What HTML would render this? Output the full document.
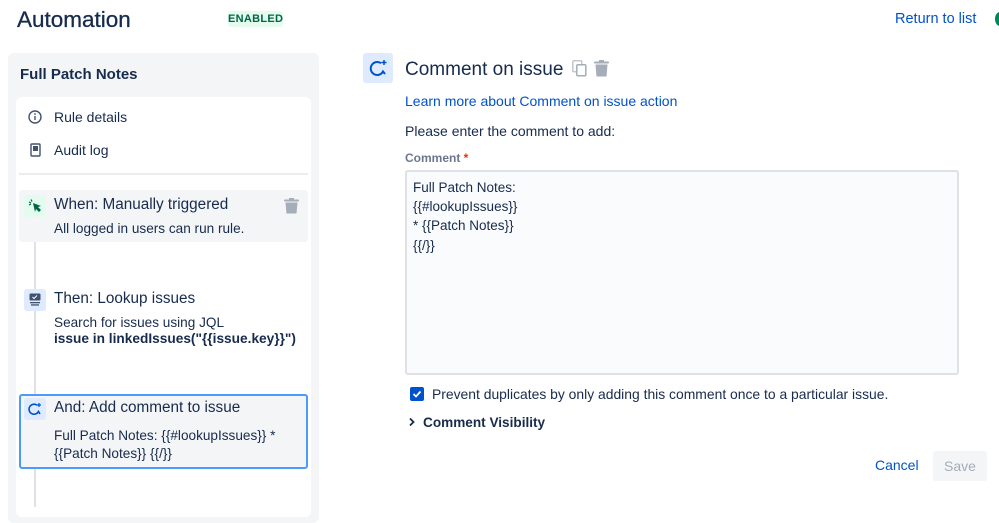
<!DOCTYPE html>
<html><head><meta charset="utf-8"><style>
*{box-sizing:border-box;margin:0;padding:0}
body{width:999px;height:505px;overflow:hidden;background:#fff;font-family:"Liberation Sans",sans-serif;color:#172b4d;position:relative}
.a{position:absolute;white-space:nowrap}
</style></head><body>
<div class="a" style="left:17px;top:6px;font-size:22.5px;line-height:28px;-webkit-text-stroke:0.3px #172b4d">Automation</div>
<div class="a" style="left:228px;top:11px;width:55px;height:16px;background:#e3fcef;color:#006644;font-size:11px;font-weight:bold;line-height:16px;text-align:center;border-radius:3px;letter-spacing:.3px">ENABLED</div>
<div class="a" style="left:895px;top:10px;font-size:14.5px;color:#0052cc;line-height:18px">Return to list</div>
<div class="a" style="left:995px;top:12px;width:10px;height:14px;border-radius:50%;background:#00875a"></div>

<div class="a" style="left:8px;top:53px;width:311px;height:470px;background:#f4f5f7;border-radius:6px"></div>
<div class="a" style="left:20px;top:66px;font-size:15px;font-weight:bold;line-height:18px">Full Patch Notes</div>
<div class="a" style="left:16px;top:97px;width:295px;height:420px;background:#fff;border-radius:6px"></div>
<svg class="a" style="left:28px;top:110px" width="14" height="14"><circle cx="7" cy="7" r="6" fill="none" stroke="#42526e" stroke-width="1.4"/><rect x="6.3" y="6" width="1.4" height="4" fill="#42526e"/><circle cx="7" cy="4" r=".9" fill="#42526e"/></svg>
<div class="a" style="left:54px;top:109px;font-size:14px;line-height:17px">Rule details</div>
<svg class="a" style="left:30px;top:143px" width="12" height="14"><rect x="1" y="1" width="9" height="12" rx="1" fill="none" stroke="#42526e" stroke-width="1.4"/><rect x="3" y="3" width="5" height="5" fill="#42526e"/></svg>
<div class="a" style="left:54px;top:142px;font-size:14px;line-height:17px">Audit log</div>
<div class="a" style="left:19px;top:173px;width:289px;height:2px;background:#ebecf0"></div>

<div class="a" style="left:34px;top:217px;width:2px;height:290px;background:#dfe1e6"></div>
<div class="a" style="left:19px;top:190px;width:289px;height:52px;background:#f4f5f7;border-radius:3px"></div>
<div class="a" style="left:24px;top:195px;width:22px;height:22px;background:#e3fcef;border-radius:3px"></div>
<svg class="a" style="left:28px;top:199px" width="14" height="14"><path d="M5 4l8 3-3 1 3 3-2 2-3-3-1 3z" fill="#006644"/><path d="M1 3l2 1M3 0.5l1 2M1 6l2-1" stroke="#006644" stroke-width="1.2"/></svg>
<div class="a" style="left:54px;top:196px;font-size:15.3px;line-height:18px">When: Manually triggered</div>
<svg class="a" style="left:284px;top:198px" width="15" height="16"><rect x="0" y="1.5" width="15" height="2" rx="1" fill="#a5adba"/><rect x="5" y="0" width="5" height="2" fill="#a5adba"/><path d="M1.5 4.5h12l-1 11h-10z" fill="#a5adba"/></svg>
<div class="a" style="left:54px;top:221px;font-size:13.6px;line-height:16px">All logged in users can run rule.</div>

<div class="a" style="left:24px;top:289px;width:22px;height:22px;background:#deebff;border-radius:3px"></div>
<svg class="a" style="left:29px;top:293px" width="12" height="13"><rect x="0.5" y="0.5" width="11" height="7" rx="1" fill="#42526e"/><path d="M3.5 4l1.5 1.5 3-3" stroke="#fff" fill="none" stroke-width="1"/><rect x="1" y="9" width="10" height="1.3" fill="#42526e"/><rect x="2" y="11.3" width="8" height="1.3" fill="#42526e"/></svg>
<div class="a" style="left:54px;top:290px;font-size:15.3px;line-height:18px">Then: Lookup issues</div>
<div class="a" style="left:54px;top:315px;font-size:13.6px;line-height:16px">Search for issues using JQL</div>
<div class="a" style="left:54px;top:331px;font-size:13.7px;line-height:16px;font-weight:bold">issue in linkedIssues("{{issue.key}}")</div>

<div class="a" style="left:19px;top:394px;width:289px;height:75px;background:#f4f5f7;border:2px solid #4c9aff;border-radius:3px"></div>
<div class="a" style="left:24px;top:398px;width:22px;height:22px;background:#deebff;border-radius:3px"></div>
<svg class="a" style="left:28px;top:402px" width="14" height="14"><path d="M9 3.2A5 5 0 1 0 10.5 9.5L12 12" fill="none" stroke="#0052cc" stroke-width="1.6"/><path d="M11 1v4M9 3h4" stroke="#0052cc" stroke-width="1.2"/></svg>
<div class="a" style="left:54px;top:399px;font-size:15.3px;line-height:18px">And: Add comment to issue</div>
<div class="a" style="left:54px;top:428px;font-size:13.6px;line-height:16px">Full Patch Notes: {{#lookupIssues}} *</div>
<div class="a" style="left:54px;top:446px;font-size:13.6px;line-height:16px">{{Patch Notes}} {{/}}</div>

<div class="a" style="left:363px;top:53px;width:30px;height:30px;background:#deebff;border-radius:3px"></div>
<svg class="a" style="left:369px;top:59px" width="19" height="19"><path d="M12 4.2A6.5 6.5 0 1 0 14 12.5L16 15" fill="none" stroke="#0052cc" stroke-width="2"/><path d="M15 1v5M12.5 3.5h5" stroke="#0052cc" stroke-width="1.5"/></svg>
<div class="a" style="left:405px;top:58px;font-size:19px;line-height:23px">Comment on issue</div>
<svg class="a" style="left:572px;top:60px" width="15" height="17"><rect x="0.8" y="0.8" width="9" height="11" rx="1" fill="none" stroke="#c1c7d0" stroke-width="1.5"/><rect x="4.8" y="4.8" width="9" height="11" rx="1" fill="#fff" stroke="#a5adba" stroke-width="1.5"/></svg>
<svg class="a" style="left:594px;top:60px" width="15" height="17"><rect x="0" y="1.5" width="15" height="2" rx="1" fill="#a5adba"/><rect x="5" y="0" width="5" height="2" fill="#a5adba"/><path d="M1.5 4.5h12l-1 12h-10z" fill="#a5adba"/></svg>
<div class="a" style="left:405px;top:93px;font-size:14px;line-height:17px;color:#0052cc">Learn more about Comment on issue action</div>
<div class="a" style="left:405px;top:123px;font-size:14px;line-height:17px">Please enter the comment to add:</div>
<div class="a" style="left:405px;top:151px;font-size:12px;line-height:15px;font-weight:bold;color:#6b778c">Comment <span style="color:#de350b">*</span></div>
<div class="a" style="left:405px;top:170px;width:554px;height:205px;background:#fafbfc;border:2px solid #dfe1e6;border-radius:3px"></div>
<div class="a" style="left:413px;top:178px;font-size:13.5px;line-height:19.2px">Full Patch Notes:<br>{{#lookupIssues}}<br>* {{Patch Notes}}<br>{{/}}</div>
<div class="a" style="left:410px;top:387px;width:14px;height:14px;background:#0052cc;border-radius:2px"></div>
<svg class="a" style="left:410px;top:387px" width="14" height="14"><path d="M3.5 7l2.5 2.5 4.5-5" stroke="#fff" stroke-width="1.8" fill="none"/></svg>
<div class="a" style="left:432px;top:386px;font-size:13.9px;line-height:17px">Prevent duplicates by only adding this comment once to a particular issue.</div>
<svg class="a" style="left:408px;top:417px" width="8" height="10"><path d="M2 1.5l3.5 3.5L2 8.5" stroke="#172b4d" stroke-width="1.8" fill="none"/></svg>
<div class="a" style="left:423px;top:414px;font-size:13.6px;line-height:17px;font-weight:bold">Comment Visibility</div>
<div class="a" style="left:875px;top:457px;font-size:14px;line-height:17px;color:#0052cc">Cancel</div>
<div class="a" style="left:933px;top:451px;width:54px;height:30px;background:#f4f5f7;border-radius:3px;color:#a5adba;font-size:14px;line-height:30px;text-align:center">Save</div>
</body></html>
